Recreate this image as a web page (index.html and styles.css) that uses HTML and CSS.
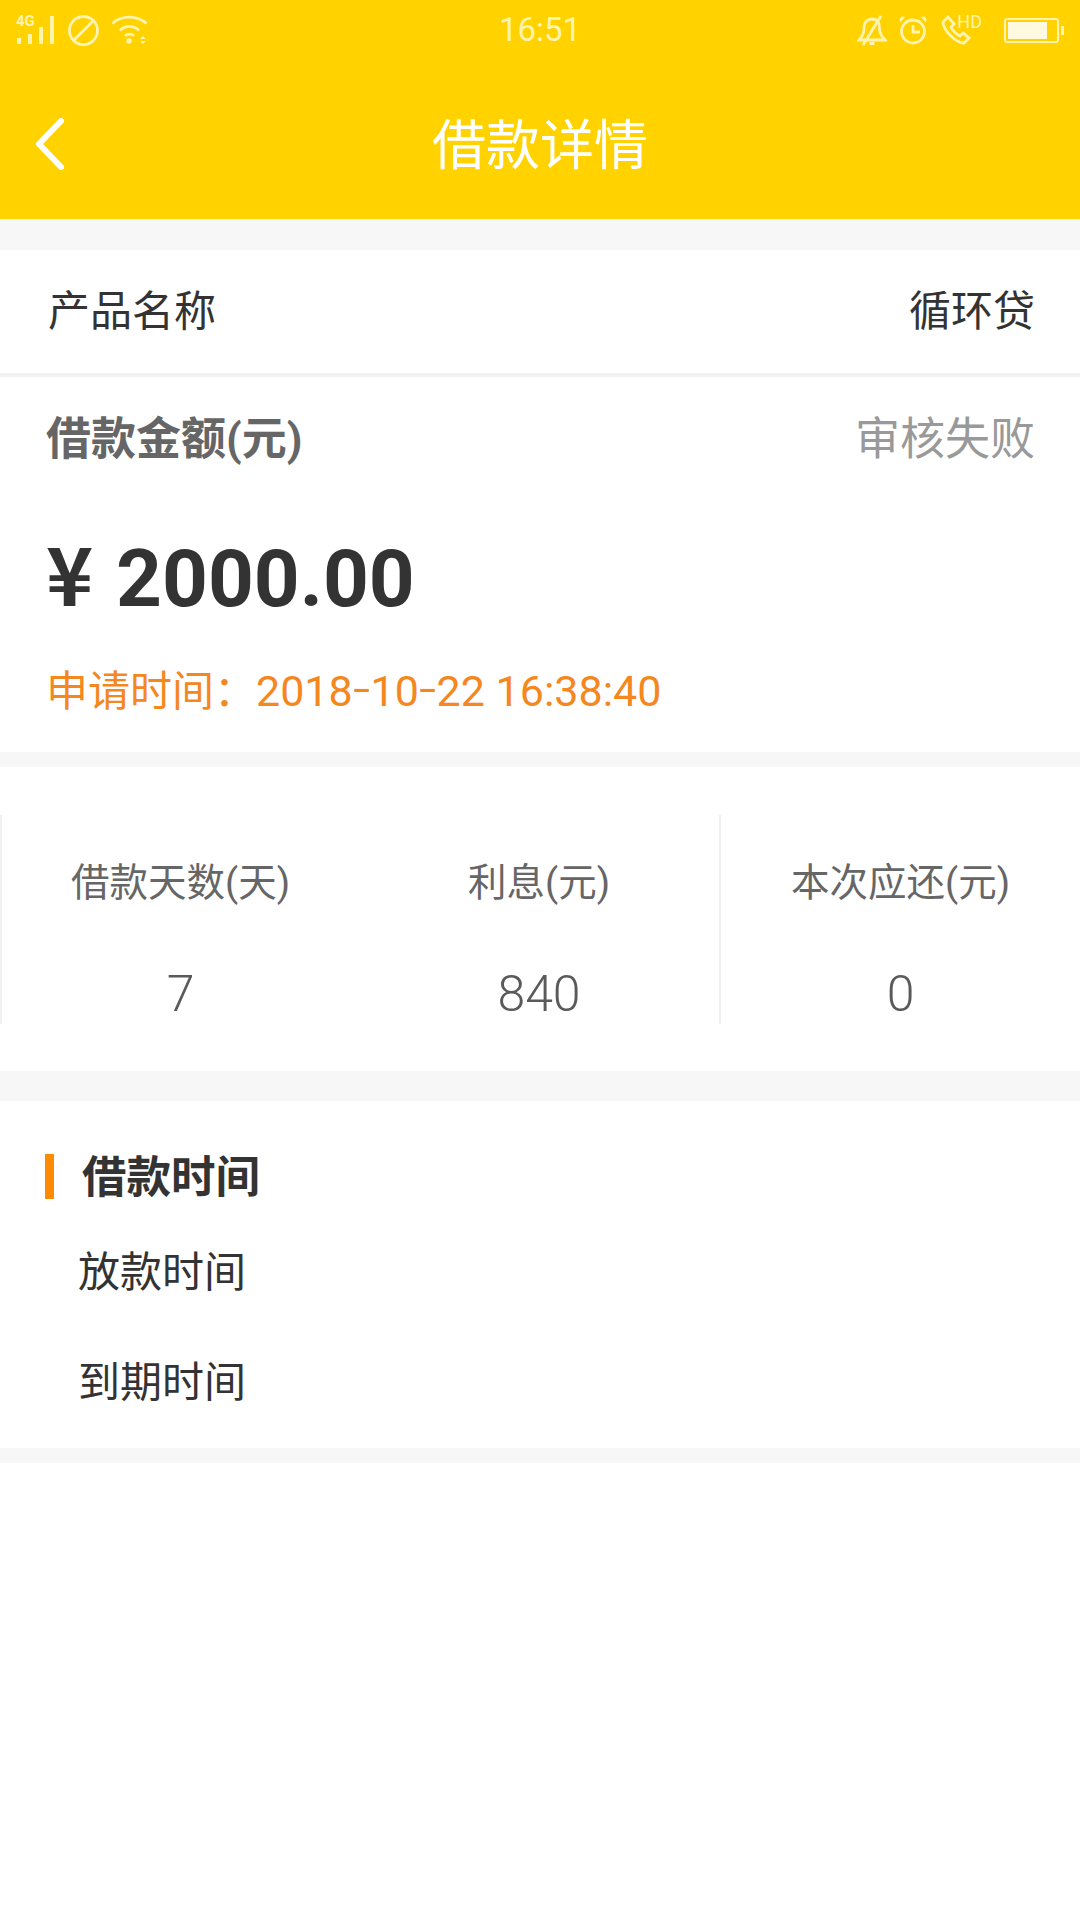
FILE: index.html
```html
<!DOCTYPE html>
<html>
  <head>
    <meta charset="utf-8">
    <title>借款详情</title>
    <link rel="stylesheet" href="styles.css">
  </head>
  <body>
    <header class="header">
      <div class="status-bar">
        <div class="status-left">
          <div class="signal">
            <span class="signal-type">4G</span>
            <svg class="icon-bars" width="40" height="30" viewBox="0 0 40 30">
              <rect x="2" y="22" width="4" height="6"/>
              <rect x="13" y="18" width="4" height="10"/>
              <rect x="24" y="11" width="4" height="17"/>
              <rect x="35" y="0" width="4" height="28"/>
            </svg>
          </div>
          <svg class="icon-block" width="31" height="31" viewBox="0 0 31 31">
            <circle cx="15.5" cy="15.5" r="14"/>
            <path d="M6 25 25 6"/>
          </svg>
          <svg class="icon-wifi" width="38" height="32" viewBox="0 0 38 32">
            <path d="M1.5 9.500C10 1 26 1 35.500 9.500"/>
            <path d="M9 16.500C14 11 23 11 28 16.500"/>
            <path d="M14 22C16 19.500 21 19.500 23 22"/>
            <circle class="solid" cx="18" cy="27" r="2.800"/>
            <path class="solid" d="M29 25h6l-3-3zM29 27h6l-3 3z"/>
          </svg>
        </div>
        <div class="status-time">16:51</div>
        <div class="status-right">
          <svg class="icon-bell" width="30" height="32" viewBox="0 0 30 32">
            <path d="M2 26c3-3 5-6 5-12 0-6 3.500-9 8-9 4.500 0 7.500 3 7.500 9 0 6 2.500 9 5.500 12z"/>
            <path d="M24 2 6 31"/>
            <path class="solid" d="M12.500 28h5v3h-5z"/>
          </svg>
          <svg class="icon-alarm" width="28" height="30" viewBox="0 0 28 30">
            <circle cx="14" cy="16.500" r="11.500"/>
            <path d="M14 10v7h7"/>
            <path class="solid" d="M1 7.500 6.500 2 2.500 1.500 0.500 4zM27 7.500 21.500 2l4-.5 2 2.500z"/>
          </svg>
          <div class="call">
            <svg class="icon-call" width="30" height="30" viewBox="0 0 30 30">
              <path d="M7 2 2 7c0 8 13 21 21 21l5-5-6-5-3 3c-3-1-8-6-9-9l3-3z"/>
            </svg>
            <span class="call-type">HD</span>
          </div>
          <div class="battery"><div class="battery-level"></div></div>
        </div>
      </div>
      <div class="title-bar">
        <svg class="back" width="28" height="52" viewBox="0 0 28 52">
          <path d="M25 3 3 26l22 23"/>
        </svg>
        <h1 class="title">借款详情</h1>
      </div>
    </header>

    <main class="content">
      <section class="card product">
        <span>产品名称</span>
        <span>循环贷</span>
      </section>

      <section class="card amount">
        <div class="amount-head">
          <span class="amount-label">借款金额(元)</span>
          <span class="amount-status">审核失败</span>
        </div>
        <div class="amount-value"><span class="yen">¥</span> 2000.00</div>
        <div class="amount-time">申请时间：<span class="amount-date">2018<span class="dash">-</span>10<span class="dash">-</span>22 16:38:40</span></div>
      </section>

      <section class="card stats">
        <div class="stat stat-line">
          <div class="stat-label">借款天数(天)</div>
          <div class="stat-value">7</div>
        </div>
        <div class="stat">
          <div class="stat-label">利息(元)</div>
          <div class="stat-value">840</div>
        </div>
        <div class="stat stat-line">
          <div class="stat-label">本次应还(元)</div>
          <div class="stat-value">0</div>
        </div>
      </section>

      <section class="card times">
        <h2 class="times-title">借款时间</h2>
        <div class="times-row">放款时间</div>
        <div class="times-row">到期时间</div>
      </section>
    </main>
  </body>
</html>
```

FILE: styles.css
```css
* {
  box-sizing: border-box;
}
body {
  margin: 0;
  background-color: #fff;
  color: #333;
  font-family: Roboto, "Noto Sans CJK SC", sans-serif;
}

/* yellow header */
.header {
  height: 219px;
  background-color: #ffd200;
}
.status-bar {
  display: grid;
  grid-template-columns: 1fr auto 1fr;
  align-items: center;
  height: 60px;
  padding: 0 15px 6px;
}
.status-left {
  display: flex;
  align-items: center;
  gap: 12px;
}
.status-right {
  display: flex;
  align-items: center;
  justify-content: flex-end;
  gap: 12px;
  padding-right: 6px;
}
.status-time {
  color: #fff3b0;
  font-size: 33px;
  line-height: 60px;
}
.status-bar svg {
  display: block;
  fill: none;
  stroke: #fff3b0;
  stroke-width: 2.800;
}
.status-bar svg .solid,
.status-bar .icon-bars {
  fill: #fff3b0;
  stroke: none;
}
.signal {
  position: relative;
  width: 41px;
  height: 32px;
}
.signal-type {
  position: absolute;
  left: 1px;
  top: 0;
  color: #fff3b0;
  font-size: 15px;
  font-weight: 700;
  line-height: 14px;
}
.icon-bars {
  position: absolute;
  left: 0;
  bottom: 0;
}
.call {
  position: relative;
  width: 41px;
  height: 30px;
  margin-left: 2px;
}
.call-type {
  position: absolute;
  right: 0;
  top: -3px;
  color: #fff3b0;
  font-size: 18px;
  line-height: 20px;
}
.battery {
  position: relative;
  width: 55px;
  height: 25px;
  margin-left: 10px;
  padding: 2px;
  border: 2px solid #fff3b0;
  border-radius: 3px;
}
.battery:after {
  content: '';
  position: absolute;
  right: -7px;
  top: 6px;
  width: 3px;
  height: 9px;
  background-color: #fff3b0;
}
.battery-level {
  width: 39px;
  height: 100%;
  background-color: #fff9e0;
}
.title-bar {
  position: relative;
  display: flex;
  align-items: center;
  justify-content: center;
  height: 159px;
  padding-top: 15px;
}
.back {
  position: absolute;
  left: 36px;
  top: 58px;
  fill: none;
  stroke: #fff;
  stroke-width: 6;
  stroke-linecap: round;
  stroke-linejoin: round;
}
.title {
  margin: 0;
  color: #fff;
  font-size: 54px;
  font-weight: 400;
  line-height: 70px;
}

/* grey page with white cards */
.content {
  padding: 31px 0 15px;
  background-color: #f7f7f7;
}
.card {
  background-color: #fff;
}
.product {
  display: flex;
  align-items: center;
  justify-content: space-between;
  height: 127px;
  padding: 0 45px 8px 48px;
  border-bottom: 4px solid #f2f2f2;
  font-size: 42px;
}
.amount {
  height: 375px;
  padding: 33px 45px 0 46px;
}
.amount-head {
  display: flex;
  justify-content: space-between;
  line-height: 60px;
  font-size: 45px;
}
.amount-label {
  color: #666;
  font-weight: 700;
}
.amount-status {
  color: #999;
}
.amount-value {
  margin-top: 59px;
  color: #333;
  font-size: 80px;
  font-weight: 700;
  line-height: 100px;
  word-spacing: 3px;
}
.yen {
  font-family: "Noto Sans CJK SC", sans-serif;
  line-height: 0;
}
.amount-time {
  margin-top: 32px;
  color: #f5871f;
  font-size: 42px;
  line-height: 60px;
}
.amount-date {
  font-size: 43px;
}
.dash {
  font-size: 62px;
  font-weight: 300;
  line-height: 0;
  vertical-align: -4px;
}
.stats {
  display: grid;
  grid-template-columns: 359px 360px 361px;
  height: 304px;
  margin-top: 15px;
  padding: 48px 0 47px;
}
.stat {
  padding-top: 38px;
  text-align: center;
  color: #666;
}
.stat-line {
  border-left: 2px solid #f0f0f0;
}
.stat-label {
  font-size: 38.500px;
  line-height: 60px;
}
.stat-value {
  margin-top: 51px;
  color: #5a5a5a;
  font-size: 50px;
  font-weight: 300;
  line-height: 60px;
}
.times {
  margin-top: 30px;
  padding: 53px 0 10px 45px;
}
.times-title {
  height: 45px;
  margin: 0 0 19px;
  padding-left: 28px;
  border-left: 9px solid #ff8a00;
  color: #333;
  font-size: 44.500px;
  font-weight: 700;
  line-height: 49px;
}
.times-row {
  padding-left: 33px;
  color: #333;
  font-size: 42px;
  line-height: 110px;
}
```
